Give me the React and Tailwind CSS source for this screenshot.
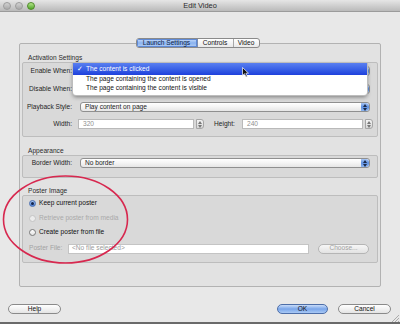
import React from "react";

const font = { fontFamily: '"Liberation Sans", Arial, sans-serif' };

function Stepper({ blue = true }) {
  return (
    <div
      className={
        "flex h-full w-[8px] flex-col items-center justify-center gap-[1px] rounded-r-[3px] " +
        (blue
          ? "bg-gradient-to-b from-[#a9c6f3] via-[#5d8fe0] to-[#8fb6f0]"
          : "bg-gradient-to-b from-[#f4f4f4] to-[#d6d6d6] border border-[#a6a6a6]")
      }
    >
      <svg width="4" height="3" viewBox="0 0 4 3">
        <path d="M0 3 L2 0 L4 3Z" fill={blue ? "#1b2a4a" : "#777"} />
      </svg>
      <svg width="4" height="3" viewBox="0 0 4 3">
        <path d="M0 0 L2 3 L4 0Z" fill={blue ? "#1b2a4a" : "#777"} />
      </svg>
    </div>
  );
}

function Popup({ text, w = "w-[290px]" }) {
  return (
    <div
      className={
        "flex h-[10px] items-center rounded-[3px] border border-[#8f8f8f] bg-gradient-to-b from-[#ffffff] via-[#f4f4f4] to-[#e6e6e6] " +
        w
      }
    >
      <div className="flex-1 pl-[4px] text-[6.6px] leading-none text-[#1c1c1c]">{text}</div>
      <Stepper />
    </div>
  );
}

function Label({ children, w = "w-[49px]" }) {
  return <div className={"text-right text-[6.6px] leading-none text-[#1e1e1e] " + w}>{children}</div>;
}

function Radio({ checked, disabled, children }) {
  return (
    <div className="flex h-[9px] items-center gap-[3px]">
      <div
        className={
          "flex h-[7px] w-[7px] items-center justify-center rounded-full border " +
          (checked
            ? "border-[#4a6fb2] bg-gradient-to-b from-[#a8c6f2] to-[#4f82d8]"
            : disabled
            ? "border-[#c4c4c4] bg-[#ececec]"
            : "border-[#7a7a7a] bg-gradient-to-b from-[#ffffff] to-[#e2e2e2]")
        }
      >
        {checked && <div className="h-[3px] w-[3px] rounded-full bg-[#13244a]" />}
      </div>
      <div className={"text-[6.6px] leading-none " + (disabled ? "text-[#a9a9a9]" : "text-[#111]")}>
        {children}
      </div>
    </div>
  );
}

function Btn({ children, w, primary, disabled }) {
  return (
    <div
      className={
        "flex h-[10px] items-center justify-center rounded-full border text-[6.6px] leading-none " +
        w +
        " " +
        (primary
          ? "border-[#4d6ea8] bg-gradient-to-b from-[#c9dcf8] via-[#7aa6ea] to-[#a9c9f5] text-[#111]"
          : disabled
          ? "border-[#b5b5b5] bg-gradient-to-b from-[#f6f6f6] to-[#e2e2e2] text-[#a2a2a2]"
          : "border-[#8a8a8a] bg-gradient-to-b from-[#ffffff] to-[#e4e4e4] text-[#111]")
      }
    >
      {children}
    </div>
  );
}

export default function App() {
  return (
    <div className="relative h-[324px] w-[400px] overflow-hidden bg-[#e8e8e8]" style={font}>
      {/* Title bar */}
      <div className="grid h-[12px] grid-cols-[1fr_auto_1fr] items-center border-b border-[#9b9b9b] bg-gradient-to-b from-[#e6e6e6] to-[#bababa]">
        <div className="flex items-center gap-[4px] pl-[3px]">
          <div className="h-[8px] w-[8px] rounded-full border border-[#9c9c9c] bg-gradient-to-b from-[#d2d2d2] to-[#a9a9a9]" />
          <div className="h-[8px] w-[8px] rounded-full border border-[#9c9c9c] bg-gradient-to-b from-[#d2d2d2] to-[#a9a9a9]" />
          <div className="h-[8px] w-[8px] rounded-full border border-[#4f8a2a] bg-gradient-to-b from-[#b5e68a] to-[#4fa623]" />
        </div>
        <div className="text-[7.4px] leading-none text-[#2a2a2a]">Edit Video</div>
        <div />
      </div>

      {/* Body */}
      <div className="px-[19px] pt-[26px]">
        {/* Tabs */}
        <div className="relative z-10 mb-[-5px] flex justify-center pr-[5px]">
          <div className="flex h-[10px] overflow-hidden rounded-[3px] border border-[#8a8a8a] bg-gradient-to-b from-[#ffffff] to-[#e9e9e9] text-[6.6px] leading-none text-[#111]">
            <div className="flex w-[61px] items-center justify-center border-r border-[#7d8fb0] bg-gradient-to-b from-[#c9ddfa] via-[#8ab2ef] to-[#b6d0f6] text-[#0f1f45] shadow-[inset_0_0_0_1px_#5f8ad6]">
              Launch Settings
            </div>
            <div className="flex w-[36px] items-center justify-center border-r border-[#a8a8a8]">Controls</div>
            <div className="flex w-[25px] items-center justify-center">Video</div>
          </div>
        </div>

        {/* Panel */}
        <div className="h-[244px] rounded-[2px] border border-[#b2b2b2] bg-[#e2e2e2] px-[2px]">
          <div className="h-[9px]" />
          <div className="h-[9px] pl-[6px] text-[6.6px] leading-[9px] text-[#2a2a2a]">Activation Settings</div>
          <div className="h-[75px] rounded-[2px] border border-[#bdbdbd] bg-[#d9d9d9] pt-[3px]">
            <div className="flex h-[10px] items-center">
              <Label>Enable When:</Label>
              <div className="ml-[8px]">
                <Popup text="" />
              </div>
            </div>
            <div className="mt-[8px] flex h-[10px] items-center">
              <Label>Disable When:</Label>
              <div className="ml-[8px]">
                <Popup text="" />
              </div>
            </div>
            <div className="mt-[8px] flex h-[10px] items-center">
              <Label>Playback Style:</Label>
              <div className="ml-[8px]">
                <Popup text="Play content on page" />
              </div>
            </div>
            <div className="mt-[7px] flex h-[10px] items-center">
              <Label>Width:</Label>
              <div className="ml-[6px] flex h-[10px] w-[116px] items-center border border-[#b9b9b9] bg-white pl-[4px] text-[6.6px] leading-none text-[#8f8f8f]">
                320
              </div>
              <div className="ml-[2px] h-[10px]">
                <Stepper blue={false} />
              </div>
              <div className="ml-[10px] w-[28px] text-[6.6px] leading-none text-[#1e1e1e]">Height:</div>
              <div className="flex h-[10px] w-[121px] items-center border border-[#b9b9b9] bg-white pl-[4px] text-[6.6px] leading-none text-[#8f8f8f]">
                240
              </div>
              <div className="ml-[2px] h-[10px]">
                <Stepper blue={false} />
              </div>
            </div>
          </div>

          <div className="h-[9px]" />
          <div className="h-[9px] pl-[6px] text-[6.6px] leading-[9px] text-[#2a2a2a]">Appearance</div>
          <div className="h-[23px] rounded-[2px] border border-[#bdbdbd] bg-[#d9d9d9] pt-[2px]">
            <div className="flex h-[10px] items-center">
              <Label>Border Width:</Label>
              <div className="ml-[8px]">
                <Popup text="No border" />
              </div>
            </div>
          </div>

          <div className="h-[8px]" />
          <div className="h-[9px] pl-[6px] text-[6.6px] leading-[9px] text-[#2a2a2a]">Poster Image</div>
          <div className="h-[68px] rounded-[2px] border border-[#bdbdbd] bg-[#d9d9d9] pl-[6px] pt-[3px]">
            <Radio checked>Keep current poster</Radio>
            <div className="h-[6px]" />
            <Radio disabled>Retrieve poster from media</Radio>
            <div className="h-[5px]" />
            <Radio>Create poster from file</Radio>
            <div className="mt-[6px] flex h-[11px] items-center">
              <div className="w-[39px] text-[6.6px] leading-none text-[#a3a3a3]">Poster File:</div>
              <div className="flex h-[10px] w-[241px] items-center border border-[#c4c4c4] bg-white pl-[3px] text-[6.6px] leading-none text-[#9a9a9a]">
                &lt;No file selected&gt;
              </div>
              <div className="ml-[9px]">
                <Btn w="w-[51px]" disabled>
                  Choose...
                </Btn>
              </div>
            </div>
          </div>
        </div>
      </div>

      {/* Bottom buttons */}
      <div className="mt-[17px] flex items-center justify-between pl-[8px] pr-[9px]">
        <Btn w="w-[53px]">Help</Btn>
        <div className="flex gap-[10px]">
          <Btn w="w-[51px]" primary>
            OK
          </Btn>
          <Btn w="w-[53px]">Cancel</Btn>
        </div>
      </div>

      {/* Bottom window edge */}
      <div className="absolute bottom-0 left-0 h-[2px] w-full bg-[#6a6a6a]" />
      <svg className="absolute bottom-[2px] right-[1px]" width="8" height="8" viewBox="0 0 8 8">
        <path d="M8 1 L1 8 M8 4 L4 8 M8 7 L7 8" stroke="#9a9a9a" strokeWidth="0.8" />
      </svg>

      {/* Open popup menu overlay */}
      <div className="absolute left-[73px] top-[63px] h-[32px] w-[294px] rounded-b-[3px] bg-white shadow-[0_2px_4px_rgba(0,0,0,0.45)] ring-1 ring-[#bdbdbd]">
        <div className="flex h-[12px] items-center bg-gradient-to-b from-[#5a7ff0] to-[#1f3fdc] text-[6.6px] leading-none text-white">
          <div className="w-[13px] pl-[4px]">✓</div>
          <div>The content is clicked</div>
        </div>
        <div className="flex h-[9px] items-center pl-[13px] text-[6.6px] leading-none text-[#111]">
          The page containing the content is opened
        </div>
        <div className="flex h-[9px] items-center pl-[13px] text-[6.6px] leading-none text-[#111]">
          The page containing the content is visible
        </div>
      </div>

      {/* Mouse cursor */}
      <svg className="absolute left-[242px] top-[67px]" width="8" height="11" viewBox="0 0 8 11">
        <path d="M0.5 0.5 L0.5 8.5 L2.5 6.7 L4 10 L5.3 9.4 L3.9 6.2 L6.5 6.2 Z" fill="#111" stroke="#fff" strokeWidth="0.7" />
      </svg>

      {/* Red annotation ellipse */}
      <svg className="absolute left-0 top-0" width="400" height="324" viewBox="0 0 400 324">
        <ellipse cx="65.5" cy="219.5" rx="62" ry="43.5" fill="none" stroke="#d7284f" strokeWidth="1.6" />
      </svg>
    </div>
  );
}
